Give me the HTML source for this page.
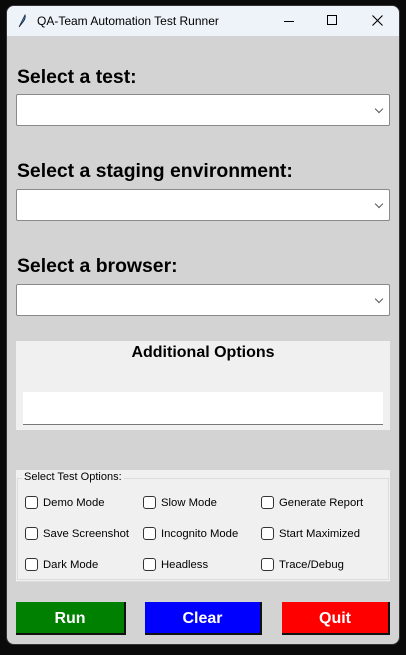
<!DOCTYPE html>
<html><head><style>
*{margin:0;padding:0;box-sizing:border-box}
body{width:406px;height:655px;background:#0a0a0a;position:relative;overflow:hidden;font-family:"Liberation Sans",sans-serif}
.win{position:absolute;left:6px;top:5px;width:394px;height:640px;background:#d3d3d3;border-radius:8px;overflow:hidden;border:1px solid #333}
.tb{position:absolute;left:0;top:0;width:100%;height:30px;background:#eef3f9}
.tt{position:absolute;left:30px;top:8px;font-size:12px;color:#000}
.a{position:absolute}
.lbl{position:absolute;left:17px;font-size:19.4px;font-weight:bold;color:#000}
.cb{position:absolute;left:16px;width:374px;height:32px;background:#fff;border:1px solid #8a8a8a;border-radius:2px}
.cb::after{content:"";position:absolute;right:7px;top:11px;width:5px;height:5px;border-right:1px solid #555;border-bottom:1px solid #555;transform:rotate(45deg)}
.chk{position:absolute;font-size:11.3px;color:#000;display:flex;align-items:center}
.chk i{display:inline-block;width:13px;height:13px;border:1px solid #333;border-radius:3px;background:#fff;margin-right:5px}
.btn{position:absolute;top:602px;height:33px;color:#fff;font-weight:bold;font-size:16px;text-align:center;line-height:34px;border-right:2px solid #111;border-bottom:2px solid #111}
</style></head><body>
<div class="win">
<div class="tb">
<svg class="a" style="left:10px;top:8px" width="10" height="14" viewBox="0 0 10 14"><path d="M2 13 L8 1 Q9 4 6 8 Z" fill="#4a8fe0" stroke="#123" stroke-width="0.8"/></svg>
<div class="tt">QA-Team Automation Test Runner</div>
<div class="a" style="left:277px;top:15px;width:10px;height:1px;background:#000"></div>
<div class="a" style="left:320px;top:9px;width:10px;height:10px;border:1px solid #000"></div>
<svg class="a" style="left:365px;top:9px" width="11" height="11"><path d="M0.5 0.5L10.5 10.5M10.5 0.5L0.5 10.5" stroke="#000" stroke-width="1.1"/></svg>
</div>
</div>
<div class="lbl" style="top:66px">Select a test:</div>
<div class="cb" style="top:94px"></div>
<div class="lbl" style="top:160px">Select a staging environment:</div>
<div class="cb" style="top:189px"></div>
<div class="lbl" style="top:255px">Select a browser:</div>
<div class="cb" style="top:284px"></div>
<div class="a" style="left:16px;top:341px;width:374px;height:89px;background:#f0f0f0"></div>
<div class="a" style="left:16px;top:344px;width:374px;text-align:center;font-weight:bold;font-size:16px">Additional Options</div>
<div class="a" style="left:23px;top:392px;width:360px;height:33px;background:#fff;border-bottom:1px solid #777"></div>
<div class="a" style="left:16px;top:470px;width:374px;height:112px;background:#f0f0f0;border-bottom:1px solid #ddd"></div>
<div class="a" style="left:17px;top:478px;width:372px;height:102px;border:1px solid #dcdcdc"></div>
<div class="a" style="left:22px;top:471px;font-size:11px;background:#f0f0f0;padding:0 2px">Select Test Options:</div>
<div class="chk" style="left:25px;top:496px"><i></i>Demo Mode</div>
<div class="chk" style="left:143px;top:496px"><i></i>Slow Mode</div>
<div class="chk" style="left:261px;top:496px"><i></i>Generate Report</div>
<div class="chk" style="left:25px;top:527px"><i></i>Save Screenshot</div>
<div class="chk" style="left:143px;top:527px"><i></i>Incognito Mode</div>
<div class="chk" style="left:261px;top:527px"><i></i>Start Maximized</div>
<div class="chk" style="left:25px;top:558px"><i></i>Dark Mode</div>
<div class="chk" style="left:143px;top:558px"><i></i>Headless</div>
<div class="chk" style="left:261px;top:558px"><i></i>Trace/Debug</div>
<div class="btn" style="left:16px;width:110px;background:#008000">Run</div>
<div class="btn" style="left:145px;width:117px;background:#0000ff">Clear</div>
<div class="btn" style="left:282px;width:108px;background:#ff0000">Quit</div>
</body></html>
